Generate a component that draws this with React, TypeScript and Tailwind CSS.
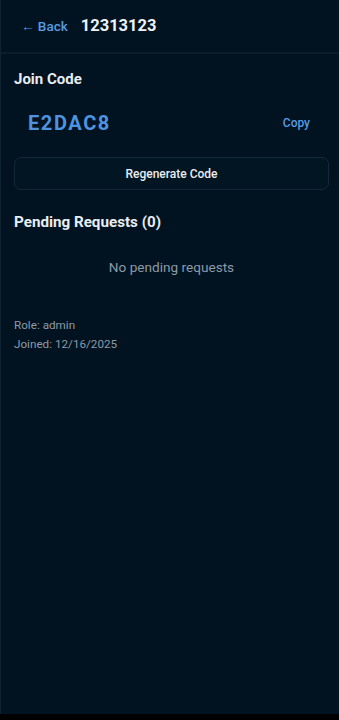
import React from "react";

export default function App() {
  return (
    <div
      className="w-[339px] h-[720px] flex flex-col bg-black overflow-hidden"
      style={{ fontFamily: "Roboto, 'Noto Sans', sans-serif" }}
    >
      <div className="flex-1 flex flex-col bg-[#011320] border-l border-[#0e2230]">
        <div className="h-[54px] flex items-center px-[20px] gap-[13px] border-b-2 border-[#0b1d2a]">
          <span className="text-[13.5px] font-medium text-[#5a9be0]">← Back</span>
          <span className="text-[16.5px] font-bold text-[#eef2f6]">12313123</span>
        </div>
        <div className="pl-[13px] pr-[10px] pt-[14px] flex flex-col">
          <div className="text-[15px] font-bold text-[#e8edf2] leading-[22px]">Join Code</div>
          <div className="flex items-center justify-between pl-[14px] pr-[19px] mt-[16px] h-[34px]">
            <span className="text-[20px] font-bold tracking-[1.6px] text-[#4f93e0]">E2DAC8</span>
            <span className="text-[12px] font-medium text-[#5a9be0]">Copy</span>
          </div>
          <button className="mt-[17px] h-[33px] w-full rounded-[7px] border border-[#14283a] bg-[#021522] text-[12px] font-medium text-[#e8edf2]">
            Regenerate Code
          </button>
          <div className="mt-[21px] text-[15.2px] font-bold text-[#e8edf2] leading-[22px]">Pending Requests (0)</div>
          <div className="mt-[24px] text-center text-[13.6px] text-[#8d9aa8] leading-[20px]">No pending requests</div>
          <div className="mt-[39px] text-[11.7px] text-[#8d9aa8] leading-[18px]">Role: admin</div>
          <div className="mt-[1px] text-[11.7px] text-[#8d9aa8] leading-[18px]">Joined: 12/16/2025</div>
        </div>
      </div>
      <div className="h-[6px] bg-black" />
    </div>
  );
}
